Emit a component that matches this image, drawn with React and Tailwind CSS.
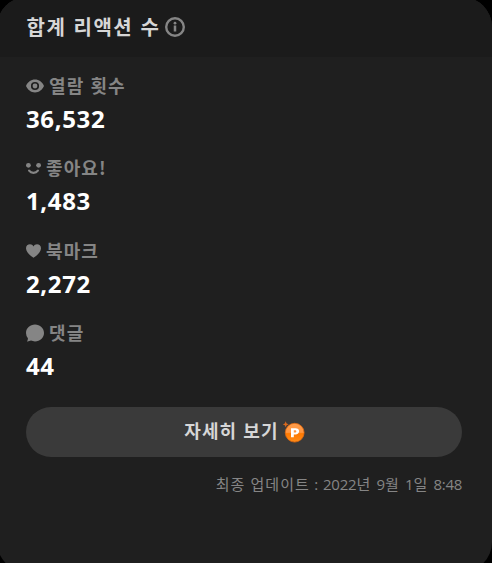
const KR = "font-['Noto_Sans_CJK_KR',sans-serif]";

function InfoIcon() {
  return (
    <svg width="20" height="20" viewBox="0 0 20 20" fill="none" className="shrink-0 text-[#858585]">
      <circle cx="10" cy="10" r="8.8" stroke="currentColor" strokeWidth="2.4" />
      <circle cx="10" cy="6.200" r="1.400" fill="currentColor" />
      <path d="M10 8.600v6" stroke="currentColor" strokeWidth="2.500" />
    </svg>
  );
}

function EyeIcon() {
  return (
    <svg width="18" height="18" viewBox="0 0 18 18" fill="currentColor" className="shrink-0">
      <path fillRule="evenodd" d="M0 9C1.6 5.2 5 2.6 9 2.6S16.4 5.2 18 9c-1.6 3.8-5 6.4-9 6.4S1.6 12.8 0 9Zm9-4.1a4.1 4.1 0 1 0 0 8.2 4.1 4.1 0 0 0 0-8.2Z" />
      <circle cx="9" cy="9" r="2.4" />
    </svg>
  );
}

function SmileIcon() {
  return (
    <svg width="15" height="18" viewBox="0 0 15 18" fill="none" className="shrink-0">
      <circle cx="2.4" cy="6.3" r="2.4" fill="currentColor" />
      <circle cx="12.6" cy="6.3" r="2.4" fill="currentColor" />
      <path d="M3.100 11.6c2.200 2.900 6.600 2.900 8.800 0" stroke="currentColor" strokeWidth="2.200" strokeLinecap="round" />
    </svg>
  );
}

function HeartIcon() {
  return (
    <svg width="15" height="18" viewBox="0 0 15 18" fill="currentColor" className="shrink-0">
      <path d="M7.5 15.8C3.4 13 0 9.800 0 6.300 0 3.900 1.800 2.300 4 2.300c1.500 0 2.800.8 3.500 2.100.7-1.300 2-2.100 3.500-2.100 2.200 0 4 1.600 4 4 0 3.500-3.400 6.700-7.500 9.500Z" />
    </svg>
  );
}

function CommentIcon() {
  return (
    <svg width="18" height="18" viewBox="0 0 18 18" fill="currentColor" className="shrink-0">
      <path d="M9 .5c5 0 9 3.700 9 8.400s-4 8.500-9 8.500c-1.500 0-2.800-.3-4-.8-1.200.6-2.500.9-4 .8.7-1 1-2.100.9-3.200A8.200 8.200 0 0 1 0 8.900C0 4.200 4 .5 9 .5Z" />
    </svg>
  );
}

function PointIcon() {
  return (
    <svg width="22" height="22" viewBox="0 0 22 22" className="shrink-0">
      <defs>
        <linearGradient id="coin" x1="0" y1="0" x2="0" y2="1">
          <stop offset="0" stopColor="#ff9d4c" />
          <stop offset=".48" stopColor="#ff9640" />
          <stop offset=".55" stopColor="#ff7900" />
          <stop offset="1" stopColor="#ff8c18" />
        </linearGradient>
      </defs>
      <circle cx="11.7" cy="11.7" r="9.400" fill="url(#coin)" stroke="#e66a0c" strokeWidth=".8" />
      <path d="M2.700.3l.9 2.100L5.700 3.300l-2.100.9-.9 2.100-.9-2.100L-.3 3.300l2.100-.9Z" fill="#d9691e" />
      <path fillRule="evenodd" d="M8 7.200h4.500c2.200 0 3.600 1.200 3.600 3.100s-1.400 3.200-3.600 3.200h-1.700v2.700H8Zm2.800 2.100v2.200h1.300c.8 0 1.200-.4 1.200-1.100s-.4-1.100-1.200-1.100Z" fill="#fff" />
    </svg>
  );
}

const STATS = [
  { label: "열람 횟수", value: "36,532", Icon: EyeIcon },
  { label: "좋아요!", value: "1,483", Icon: SmileIcon },
  { label: "북마크", value: "2,272", Icon: HeartIcon },
  { label: "댓글", value: "44", Icon: CommentIcon },
];

export default function App() {
  return (
    <div className={`h-[563px] w-[492px] overflow-hidden bg-black ${KR}`}>
      <section className="-ml-[3px] -mt-[3px] h-[575px] w-[494.5px] overflow-hidden rounded-[30px] bg-[#1f1f1f]">
        <header className="flex h-[60px] items-center gap-[5px] bg-[#1b1b1b] pl-[29.5px]">
          <h1 className="whitespace-nowrap text-[20px] font-bold leading-6 tracking-[1.5px] text-[#d6d6d6] [word-spacing:1.2px]">합계 리액션 수</h1>
          <InfoIcon />
        </header>
        <dl className="flex flex-col pl-[29px] pt-[16px]">
          {STATS.map(({ label, value, Icon }) => (
            <div key={label} className="h-[82.3px]">
              <dt className="flex h-[26px] items-center gap-[5px] whitespace-nowrap text-[18px] font-bold leading-[26px] tracking-[1.1px] text-[#858585] [word-spacing:0.9px]">
                <Icon />
                <span className="-mt-[2px]">{label}</span>
              </dt>
              <dd className="font-['Open_Sans',sans-serif] text-[24px] font-bold leading-10 tracking-[0.65px] text-white">{value}</dd>
            </div>
          ))}
        </dl>
        <div className="ml-[29px] w-[436px] pt-[4.8px]">
          <button className="flex h-[50px] w-full items-center justify-center gap-[4px] rounded-full bg-[#3a3a3a] pl-px text-[18px] font-bold tracking-[1.1px] text-[#d6d6d6] [word-spacing:0.9px]">
            <span className="-mt-[2px]">자세히 보기</span>
            <PointIcon />
          </button>
          <p className="mt-[15px] whitespace-nowrap text-right font-['Open_Sans','Noto_Sans_CJK_KR',sans-serif] text-[15px] leading-6 tracking-[1px] text-[#858585] [word-spacing:0.4px]">
            최종 업데이트<span className="tracking-[0.2px]"> : </span><span className="tracking-[-0.2px]">2022</span>년 <span className="tracking-[-0.2px]">9</span>월 <span className="tracking-[-0.2px]">1</span>일 <span className="tracking-[-0.3px]">8:48</span>
          </p>
        </div>
      </section>
    </div>
  );
}
